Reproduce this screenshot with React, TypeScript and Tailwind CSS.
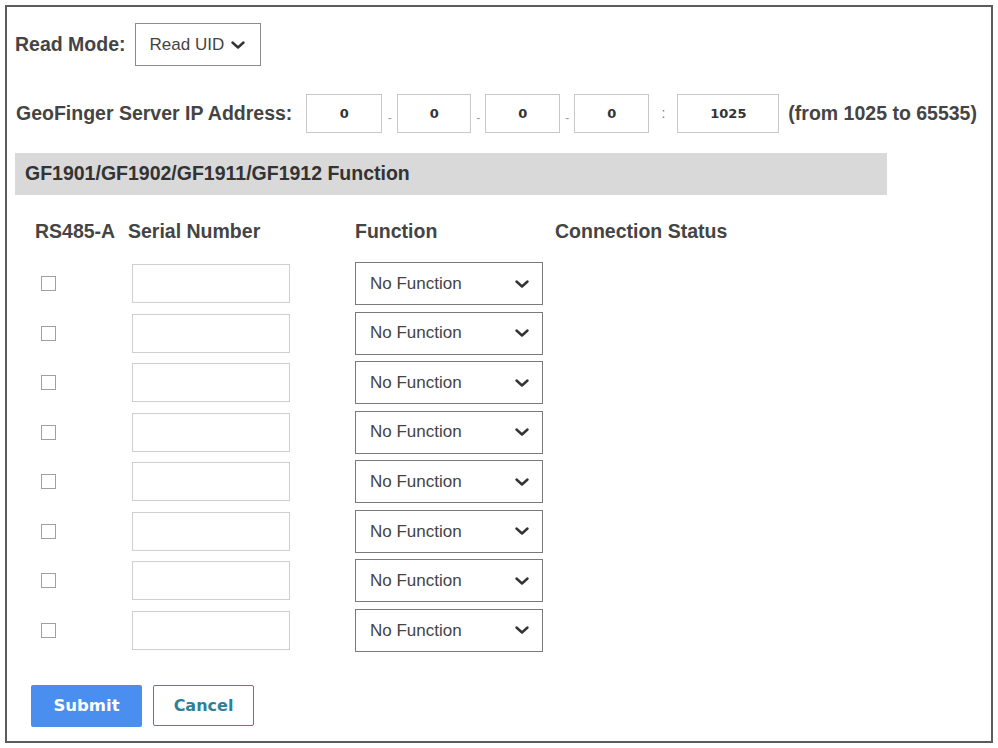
import React from "react";

const sans = { fontFamily: '"Liberation Sans", Arial, sans-serif' };
const verd = { fontFamily: '"DejaVu Sans", Verdana, sans-serif' };

function Chevron({ w, h, cls }: { w: number; h: number; cls?: string }) {
  return (
    <svg width={w} height={h} viewBox="0 0 14 8" className={cls}>
      <path d="M1.5 1.5 L7 6.5 L12.5 1.5" fill="none" stroke="#333" strokeWidth="2.4" strokeLinecap="round" strokeLinejoin="round" />
    </svg>
  );
}

function IpBox({ v, w }: { v: string; w: string }) {
  return (
    <div
      className={`${w} h-[39px] border border-[#c8c8c8] flex items-center justify-center text-[13px] font-bold text-[#333]`}
      style={verd}
    >
      {v}
    </div>
  );
}

export default function App() {
  const rows = Array.from({ length: 8 });
  return (
    <div className="w-[998px] h-[748px] bg-white p-[5px]" style={sans}>
      <div className="w-[988px] h-[738px] border-2 border-[#5c5c5c] pl-[8px] pt-[16px] text-[#404040]">
        {/* Read Mode */}
        <div className="flex items-center h-[43px]">
          <span className="text-[19.5px] font-bold text-[#444]">Read Mode:</span>
          <div className="ml-[9px] w-[126px] h-[43px] border border-[#8c8c8c] flex items-center pl-[14px]">
            <span className="text-[17px] text-[#444]">Read UID</span>
            <Chevron w={14} h={8} cls="ml-[7px]" />
          </div>
        </div>

        {/* IP */}
        <div className="flex items-center h-[39px] mt-[28px]">
          <span className="text-[19.5px] font-bold text-[#444] ml-[1px]">GeoFinger Server IP Address:</span>
          <div className="ml-[14px]">
            <IpBox v="0" w="w-[76px]" />
          </div>
          <span className="w-[15px] text-center text-[12px] text-[#999] mt-[8px]">-</span>
          <IpBox v="0" w="w-[74px]" />
          <span className="w-[14px] text-center text-[12px] text-[#999] mt-[8px]">-</span>
          <IpBox v="0" w="w-[75px]" />
          <span className="w-[14px] text-center text-[12px] text-[#999] mt-[8px]">-</span>
          <IpBox v="0" w="w-[75px]" />
          <span className="w-[28px] text-center text-[14px] text-[#777]">:</span>
          <IpBox v="1025" w="w-[102px]" />
          <span className="ml-[9px] text-[19.5px] font-bold text-[#444]">(from 1025 to 65535)</span>
        </div>

        {/* Section header */}
        <div className="mt-[20px] w-[872px] h-[42px] bg-[#d9d9d9] flex items-center pl-[10px]">
          <span className="text-[19.5px] font-bold text-[#333]">GF1901/GF1902/GF1911/GF1912 Function</span>
        </div>

        {/* Table */}
        <div className="ml-[20px] mt-[22px]">
          <div className="grid grid-cols-[93px_227px_200px_auto] h-[24px] items-center text-[19.5px] font-bold text-[#444]">
            <span>RS485-A</span>
            <span>Serial Number</span>
            <span>Function</span>
            <span>Connection Status</span>
          </div>
          <div className="mt-[21px] flex flex-col gap-y-[6.57px]">
            {rows.map((_, i) => (
              <div key={i} className="grid grid-cols-[93px_227px_200px_auto] h-[43px] items-center">
                <div className="ml-[6px] w-[15px] h-[15px] border border-[#a0a0a0] bg-white" />
                <div className="ml-[4px] w-[158px] h-[39px] border border-[#cfcfcf]" />
                <div className="w-[188px] h-[43px] border border-[#7a7a7a] flex items-center justify-between pl-[14px] pr-[13px]">
                  <span className="text-[17px] text-[#444]">No Function</span>
                  <Chevron w={14} h={8} />
                </div>
                <div />
              </div>
            ))}
          </div>
        </div>

        {/* Buttons */}
        <div className="flex items-center mt-[33px] ml-[16px] gap-[11px]">
          <button
            className="w-[111px] h-[42px] bg-[#4a8ef0] rounded-[2px] text-white text-[16.5px] font-bold"
            style={verd}
          >
            Submit
          </button>
          <button
            className="w-[101px] h-[41px] bg-white border border-[#5a7f86] rounded-[2px] text-[#2f7f9a] text-[16px] font-bold"
            style={verd}
          >
            Cancel
          </button>
        </div>
      </div>
    </div>
  );
}
